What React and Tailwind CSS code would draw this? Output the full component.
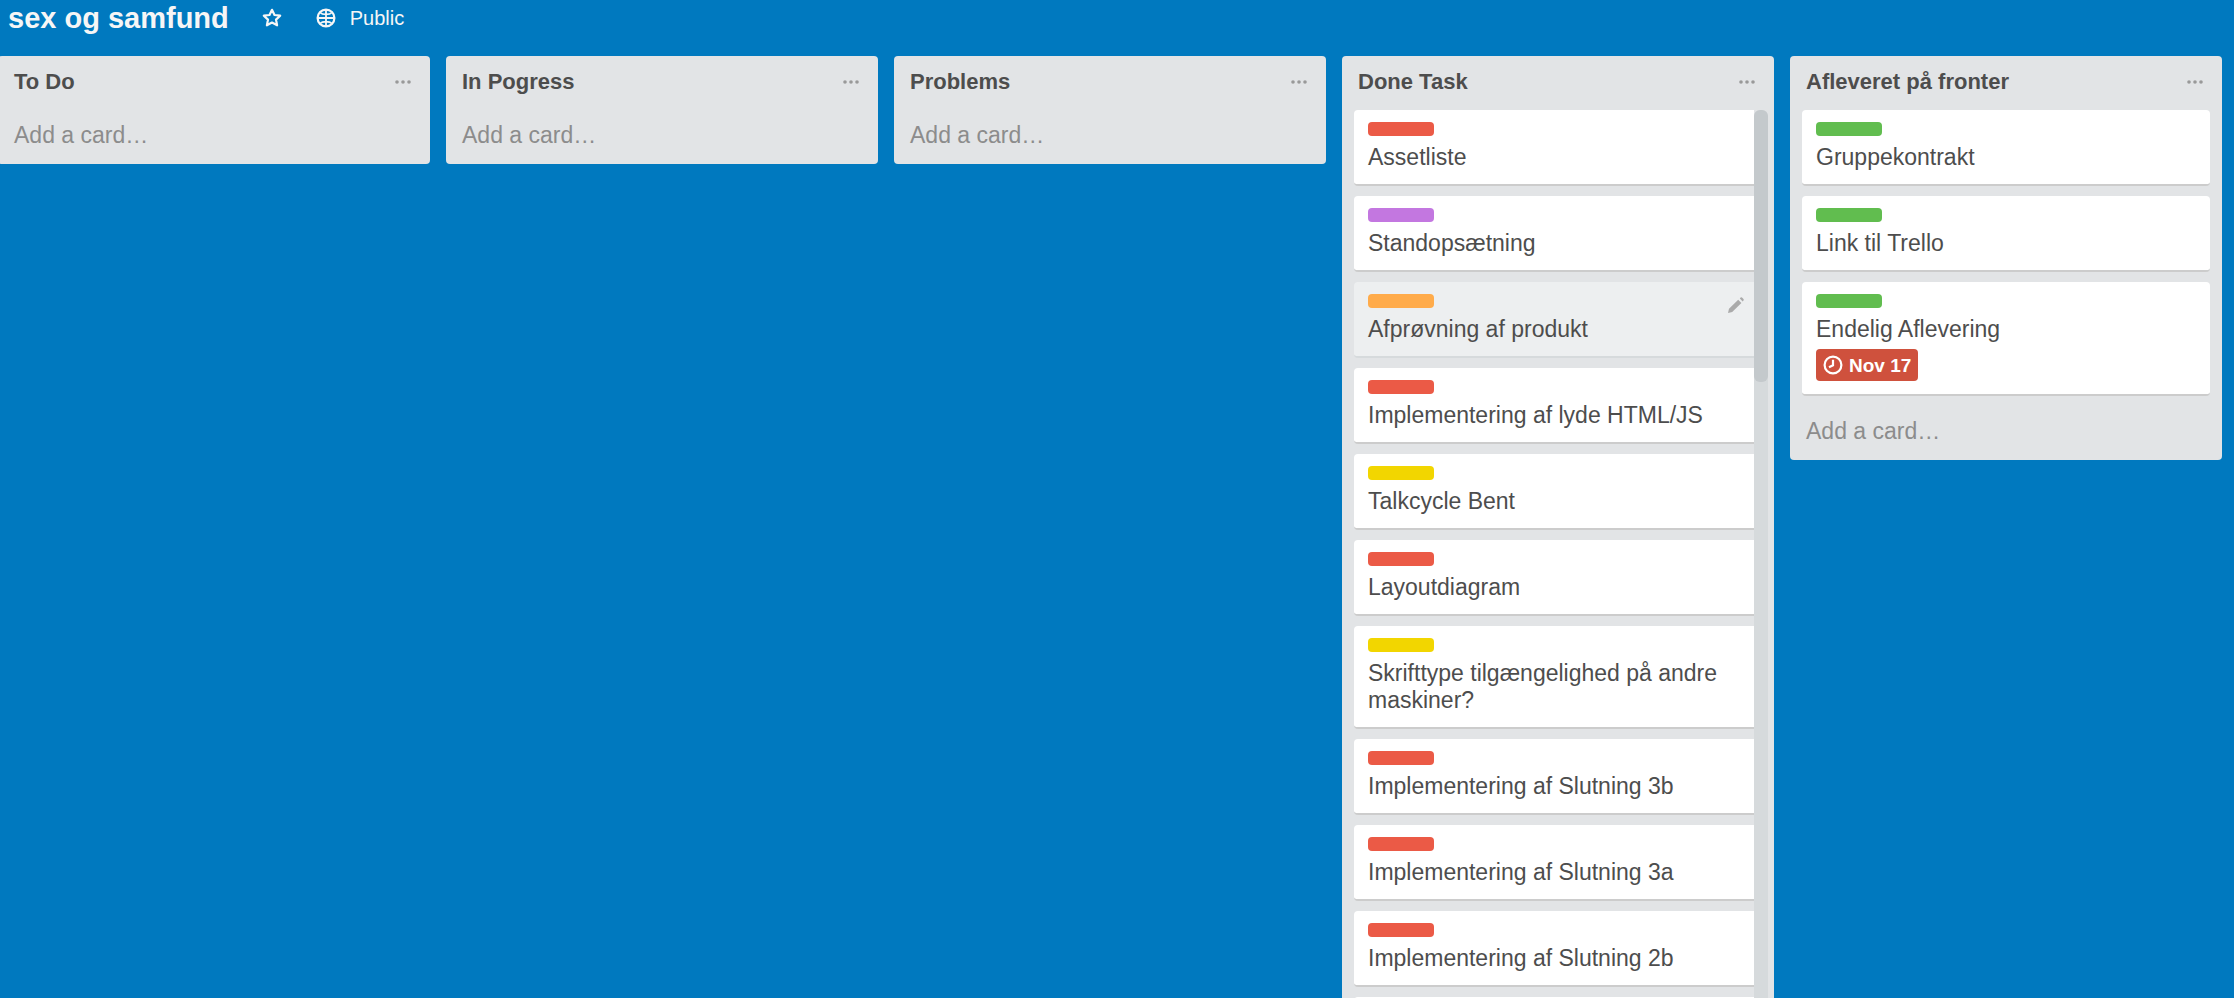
import clsx from 'clsx'

const LABEL_COLORS = {
  red:    'bg-[#eb5a46]',
  purple: 'bg-[#c377e0]',
  orange: 'bg-[#ffab4a]',
  yellow: 'bg-[#f2d600]',
  green:  'bg-[#61bd4f]',
}

const LISTS = [
  { id: 1, title: 'To Do', cards: [] },
  { id: 2, title: 'In Pogress', cards: [] },
  { id: 3, title: 'Problems', cards: [] },
  {
    id: 4,
    title: 'Done Task',
    scrolls: true,
    cards: [
      { id: 1,  label: 'red',    title: 'Assetliste' },
      { id: 2,  label: 'purple', title: 'Standopsætning' },
      { id: 3,  label: 'orange', title: 'Afprøvning af produkt', active: true },
      { id: 4,  label: 'red',    title: 'Implementering af lyde HTML/JS' },
      { id: 5,  label: 'yellow', title: 'Talkcycle Bent' },
      { id: 6,  label: 'red',    title: 'Layoutdiagram' },
      { id: 7,  label: 'yellow', title: 'Skrifttype tilgængelighed på andre maskiner?' },
      { id: 8,  label: 'red',    title: 'Implementering af Slutning 3b' },
      { id: 9,  label: 'red',    title: 'Implementering af Slutning 3a' },
      { id: 10, label: 'red',    title: 'Implementering af Slutning 2b' },
      { id: 11, label: 'red' },
    ],
  },
  {
    id: 5,
    title: 'Afleveret på fronter',
    cards: [
      { id: 12, label: 'green', title: 'Gruppekontrakt' },
      { id: 13, label: 'green', title: 'Link til Trello' },
      { id: 14, label: 'green', title: 'Endelig Aflevering', due: 'Nov 17' },
    ],
  },
]

function StarIcon() {
  return (
    <svg viewBox="0 0 20 20" className="size-5" fill="none" stroke="currentColor" strokeWidth="2.2" strokeLinejoin="round" aria-hidden="true">
      <path d="M10 1.800l2.500 5.200 5.700.7-4.200 3.900 1.100 5.700-5.100-2.800-5.100 2.800L6 11.600 1.800 7.700l5.700-.7z" />
    </svg>
  )
}

function GlobeIcon() {
  return (
    <svg viewBox="0 0 20 20" className="size-5" fill="none" stroke="currentColor" strokeWidth="1.8" aria-hidden="true">
      <circle cx="10" cy="10" r="8.4" strokeWidth="2.2" />
      <path d="M10 1.500v17M1.500 10h17M4 4.500c2.500 2.600 9.500 2.600 12 0M4 15.500c2.500-2.600 9.500-2.600 12 0" />
    </svg>
  )
}

function DotsIcon() {
  return (
    <svg viewBox="0 0 16 4" className="h-1 w-4" fill="currentColor" aria-hidden="true">
      <circle cx="2" cy="2" r="1.800" />
      <circle cx="8" cy="2" r="1.800" />
      <circle cx="14" cy="2" r="1.800" />
    </svg>
  )
}

function PencilIcon() {
  return (
    <svg viewBox="0 0 18 18" className="size-[18px]" fill="currentColor" aria-hidden="true">
      <path d="M1 17l1-4.200L11.200 3.700l3.200 3.200L5.200 16zM12.800 2.400l.8-.8q.7-.6 1.400 0l1.500 1.500q.6.7 0 1.400l-.8.900z" />
    </svg>
  )
}

function ClockIcon() {
  return (
    <svg viewBox="0 0 20 20" className="size-5" fill="none" stroke="currentColor" strokeWidth="2.200" aria-hidden="true">
      <circle cx="10" cy="10" r="8.400" />
      <path d="M10 4.800v5.500l-4 2" />
    </svg>
  )
}

function Card({ card, flush }) {
  return (
    <li
      className={clsx(
        'relative border-b-2 px-[14px] pt-3 pb-[13px]',
        flush ? 'rounded-l' : 'rounded',
        card.active ? 'border-[#d6dadc] bg-[#edeff0]' : 'border-[#cccccc] bg-white',
      )}
    >
      <div className={clsx('h-[14px] w-[66px] rounded', LABEL_COLORS[card.label])} />
      {card.title && <a href="#" className="mt-2 block">{card.title}</a>}
      {card.due && (
        <div className="mt-[6px] flex h-8 w-fit items-center gap-[6px] rounded bg-[#cf513d] px-[7px] text-[19px] font-bold text-white">
          <ClockIcon />
          {card.due}
        </div>
      )}
      {card.active && (
        <button type="button" aria-label="Edit card" className="absolute top-[14px] right-[9px] text-[#aaaaaa]">
          <PencilIcon />
        </button>
      )}
    </li>
  )
}

function List({ list }) {
  return (
    <section className="rounded bg-[#e2e4e6]">
      <header className="flex items-start justify-between pt-3 pr-[19px] pb-[15px] pl-4">
        <h2 className="text-[22px] leading-[27px] font-bold">{list.title}</h2>
        <button type="button" aria-label="List actions" className="flex h-[27px] items-center text-[#999999]">
          <DotsIcon />
        </button>
      </header>

      {list.cards.length > 0 && (
        <div className={clsx('flex pl-3', list.scrolls ? 'pr-[6px]' : 'pr-3')}>
          <ul className="flex min-w-0 flex-1 flex-col gap-[10px] pb-[10px]">
            {list.cards.map(card => (
              <Card key={card.id} card={card} flush={list.scrolls} />
            ))}
          </ul>
          {list.scrolls && (
            <div className="w-[14px] rounded-full bg-[#d6dadc]">
              <div className="h-[272px] rounded-md bg-[#c4c9cc]" />
            </div>
          )}
        </div>
      )}

      {!list.scrolls && (
        <a href="#" className="block px-4 pt-3 pb-[15px] text-[#8c8c8c]">Add a card…</a>
      )}
    </section>
  )
}

export default function App() {
  return (
    <div className="flex h-screen flex-col overflow-hidden bg-[#0079bf] font-['Helvetica_Neue','Liberation_Sans',Arial,sans-serif] text-[23px] leading-[27px] text-[#4d4d4d]">
      <header className="flex h-9 shrink-0 items-center pl-2 text-[#f6f6f6]">
        <h1 className="text-[29px] font-bold">sex og samfund</h1>
        <button type="button" aria-label="Star board" className="ml-[33px]">
          <StarIcon />
        </button>
        <button type="button" className="ml-[34px] flex items-center gap-[14px] text-[20px]">
          <GlobeIcon />
          Public
        </button>
      </header>

      <main className="mt-5 -ml-0.5 grid grid-cols-5 items-start gap-4 pr-3">
        {LISTS.map(list => (
          <List key={list.id} list={list} />
        ))}
      </main>
    </div>
  )
}
